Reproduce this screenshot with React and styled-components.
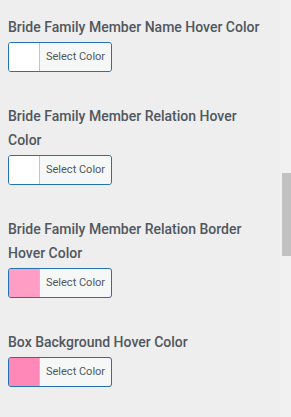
import React from "react";
import styled, { createGlobalStyle } from "styled-components";

const GlobalStyle = createGlobalStyle`
  html, body {
    margin: 0;
    padding: 0;
    background: #eeeeee;
    overflow: hidden;
  }
  body {
    font-family: Roboto, "Liberation Sans", sans-serif;
  }
`;

const Panel = styled.div`
  width: 262px;
  padding: 15px 8px;
  display: flex;
  flex-direction: column;
  gap: 32px;
`;

const Field = styled.div`
  display: flex;
  flex-direction: column;
  align-items: flex-start;
  gap: 3px;
`;

const Label = styled.div`
  font-size: 14px;
  line-height: 24px;
  font-weight: 500;
  color: #50575e;
`;

const ColorButton = styled.button`
  display: flex;
  align-items: stretch;
  height: 30px;
  padding: 0;
  margin: 0;
  border: 1px solid #2271b1;
  border-radius: 3px;
  background: ${(p) => p.$color};
  overflow: hidden;
  cursor: pointer;
  font-family: inherit;
`;

const Swatch = styled.span`
  width: 30px;
  background: ${(p) => p.$color};
`;

const ButtonText = styled.span`
  display: block;
  background: #f6f7f7;
  border-left: 1px solid #c3c4c7;
  color: #50575e;
  font-size: 11px;
  line-height: 28px;
  padding: 0 6px;
  border-radius: 0 2px 2px 0;
`;

const Track = styled.div`
  position: fixed;
  top: 0;
  right: 0;
  width: 11px;
  height: 100%;
  background: #f1f1f1;
`;

const Thumb = styled.div`
  position: absolute;
  top: 173px;
  left: 2px;
  width: 9px;
  height: 83px;
  background: #c1c1c1;
`;

const fields = [
  { label: "Bride Family Member Name Hover Color", color: "#ffffff" },
  { label: "Bride Family Member Relation Hover Color", color: "#ffffff" },
  { label: "Bride Family Member Relation Border Hover Color", color: "#ff9ec5" },
  { label: "Box Background Hover Color", color: "#ff88b8" },
];

export default function App() {
  return (
    <>
      <GlobalStyle />
      <Panel>
        {fields.map((f) => (
          <Field key={f.label}>
            <Label>{f.label}</Label>
            <ColorButton type="button" $color={f.color}>
              <Swatch $color={f.color} />
              <ButtonText>Select Color</ButtonText>
            </ColorButton>
          </Field>
        ))}
      </Panel>
      <Track>
        <Thumb />
      </Track>
    </>
  );
}
